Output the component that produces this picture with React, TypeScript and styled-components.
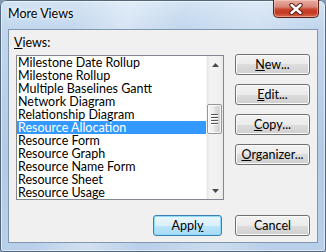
import React from "react";
import styled, { createGlobalStyle } from "styled-components";

const Global = createGlobalStyle`
  html, body { margin: 0; padding: 0; background: #7f98b6; }
  body { font-family: Lato, "Noto Sans", sans-serif; }
`;

const Window = styled.div`
  width: 326px;
  height: 252px;
  box-sizing: border-box;
  display: flex;
  flex-direction: column;
  padding: 0 8px 9px 8px;
  border-radius: 6px 6px 3px 3px;
  background:
    linear-gradient(100deg, rgba(255,255,255,0) 20%, rgba(255,255,255,0.35) 35%, rgba(255,255,255,0) 50%, rgba(255,255,255,0.25) 70%, rgba(255,255,255,0) 85%),
    linear-gradient(180deg, #d3e3f4 0px, #c2d7ee 28px, #b3cbe6 60%, #b9d0ea 100%);
  box-shadow: inset 0 0 0 1px #52667e, inset 0 0 0 2px rgba(255,255,255,0.55);
`;

const TitleBar = styled.div`
  height: 29px;
  display: flex;
  justify-content: space-between;
  align-items: flex-start;
`;

const TitleText = styled.div`
  padding-top: 6px;
  font-size: 12.5px;
  line-height: 16px;
  color: #000;
  text-shadow: 0 0 6px rgba(255,255,255,0.95), 0 0 3px rgba(255,255,255,0.9);
`;

const CloseButton = styled.div`
  width: 46px;
  height: 18px;
  margin-right: -1px;
  box-sizing: border-box;
  display: flex;
  align-items: center;
  justify-content: center;
  border: 1px solid #5b1e14;
  border-top: none;
  border-radius: 0 0 5px 5px;
  background: linear-gradient(180deg, #e8ada2 0%, #d9897a 40%, #c8452d 55%, #c23a22 75%, #d8694c 100%);
  box-shadow: inset 0 0 0 1px rgba(255,220,210,0.45);
`;

const Client = styled.div`
  flex: 1;
  display: flex;
  flex-direction: column;
  border: 1px solid #8197b0;
  background: #f0f0f0;
  padding: 5px 7px 6px 5px;
`;

const MainRow = styled.div`
  display: flex;
`;

const LeftColumn = styled.div`
  display: flex;
  flex-direction: column;
`;

const Label = styled.div`
  height: 15px;
  font-size: 12.5px;
  line-height: 15px;
  color: #000;
`;

const Key = styled.span`
  text-decoration: underline;
  text-underline-offset: 1px;
`;

const ListBox = styled.div`
  margin-top: 5px;
  margin-left: 2px;
  width: 208px;
  height: 145px;
  box-sizing: border-box;
  border: 1px solid #828790;
  background: #fff;
  display: flex;
`;

const Items = styled.div`
  flex: 1;
  display: flex;
  flex-direction: column;
`;

const Item = styled.div<{ $selected?: boolean }>`
  height: 13px;
  line-height: 13px;
  font-size: 12.5px;
  padding-left: 1px;
  white-space: nowrap;
  color: ${(p) => (p.$selected ? "#fff" : "#000")};
  background: ${(p) => (p.$selected ? "#3399ff" : "transparent")};
`;

const ScrollBar = styled.div`
  width: 17px;
  display: flex;
  flex-direction: column;
  background: linear-gradient(90deg, #e6e6e6 0%, #f3f3f3 20%, #f0f0f0 80%, #e9e9e9 100%);
  border-left: 1px solid #f5f5f5;
  box-sizing: border-box;
`;

const ArrowButton = styled.div`
  height: 17px;
  display: flex;
  align-items: center;
  justify-content: center;
`;

const Thumb = styled.div<{ $offset: number }>`
  margin: ${(p) => p.$offset}px 1px 0 0;
  height: 30px;
  box-sizing: border-box;
  border: 1px solid #979797;
  border-radius: 2px;
  background: linear-gradient(90deg, #f5f5f5 0%, #ececec 45%, #dcdcdc 55%, #cfcfcf 100%);
  box-shadow: inset 0 0 0 1px rgba(255,255,255,0.8);
  display: flex;
  flex-direction: column;
  align-items: center;
  justify-content: center;
  gap: 1px;
`;

const Grip = styled.div`
  width: 7px;
  height: 1px;
  background: #555;
  box-shadow: 0 1px 0 #fff;
  margin-bottom: 1px;
`;

const Spacer = styled.div`
  flex: 1;
`;

const ButtonColumn = styled.div`
  display: flex;
  flex-direction: column;
  gap: 9px;
  padding-top: 19px;
  margin-left: 11px;
`;

const Button = styled.div<{ $width?: number; $default?: boolean }>`
  width: ${(p) => p.$width ?? 75}px;
  height: 21px;
  box-sizing: border-box;
  display: flex;
  align-items: center;
  justify-content: center;
  font-size: 12.5px;
  color: #000;
  border-radius: 3px;
  border: 1px solid ${(p) => (p.$default ? "#3c7fb1" : "#707070")};
  background: ${(p) =>
    p.$default
      ? "linear-gradient(180deg, #eaf6fd 0%, #d9f0fc 50%, #bee6fd 50%, #a7d9f5 100%)"
      : "linear-gradient(180deg, #f2f2f2 0%, #ebebeb 50%, #dddddd 50%, #cfcfcf 100%)"};
  box-shadow: ${(p) =>
    p.$default ? "inset 0 0 0 1px #8fdcfa" : "inset 0 0 0 1px #fbfbfb"};
`;

const Footer = styled.div`
  margin-top: 15px;
  display: flex;
  justify-content: flex-end;
  gap: 13px;
`;

const UpArrow = () => (
  <svg width="7" height="4" viewBox="0 0 7 4">
    <polygon points="3.5,0 7,4 0,4" fill="#4a4a4a" />
  </svg>
);

const DownArrow = () => (
  <svg width="7" height="4" viewBox="0 0 7 4">
    <polygon points="0,0 7,0 3.5,4" fill="#4a4a4a" />
  </svg>
);

const CloseGlyph = () => (
  <svg width="14" height="12" viewBox="0 0 14 12">
    <path d="M2.5 2 L11.5 10 M11.5 2 L2.5 10" stroke="#5a2016" strokeWidth="4.4" strokeLinecap="round" />
    <path d="M2.5 2 L11.5 10 M11.5 2 L2.5 10" stroke="#fff" strokeWidth="2.4" strokeLinecap="round" />
  </svg>
);

const views = [
  "Milestone Date Rollup",
  "Milestone Rollup",
  "Multiple Baselines Gantt",
  "Network Diagram",
  "Relationship Diagram",
  "Resource Allocation",
  "Resource Form",
  "Resource Graph",
  "Resource Name Form",
  "Resource Sheet",
  "Resource Usage",
];

export default function App() {
  return (
    <>
      <Global />
      <Window>
        <TitleBar>
          <TitleText>More Views</TitleText>
          <CloseButton>
            <CloseGlyph />
          </CloseButton>
        </TitleBar>
        <Client>
          <MainRow>
            <LeftColumn>
              <Label>
                <Key>V</Key>iews:
              </Label>
              <ListBox>
                <Items>
                  {views.map((v) => (
                    <Item key={v} $selected={v === "Resource Allocation"}>
                      {v}
                    </Item>
                  ))}
                </Items>
                <ScrollBar>
                  <ArrowButton>
                    <UpArrow />
                  </ArrowButton>
                  <Thumb $offset={31}>
                    <Grip />
                    <Grip />
                    <Grip />
                    <Grip />
                  </Thumb>
                  <Spacer />
                  <ArrowButton>
                    <DownArrow />
                  </ArrowButton>
                </ScrollBar>
              </ListBox>
            </LeftColumn>
            <ButtonColumn>
              <Button>
                <Key>N</Key>ew...
              </Button>
              <Button>
                <Key>E</Key>dit...
              </Button>
              <Button>
                <Key>C</Key>opy...
              </Button>
              <Button>
                <Key>O</Key>rganizer...
              </Button>
            </ButtonColumn>
          </MainRow>
          <Footer>
            <Button $width={69} $default>
              Appl<Key>y</Key>
            </Button>
            <Button>Cancel</Button>
          </Footer>
        </Client>
      </Window>
    </>
  );
}
